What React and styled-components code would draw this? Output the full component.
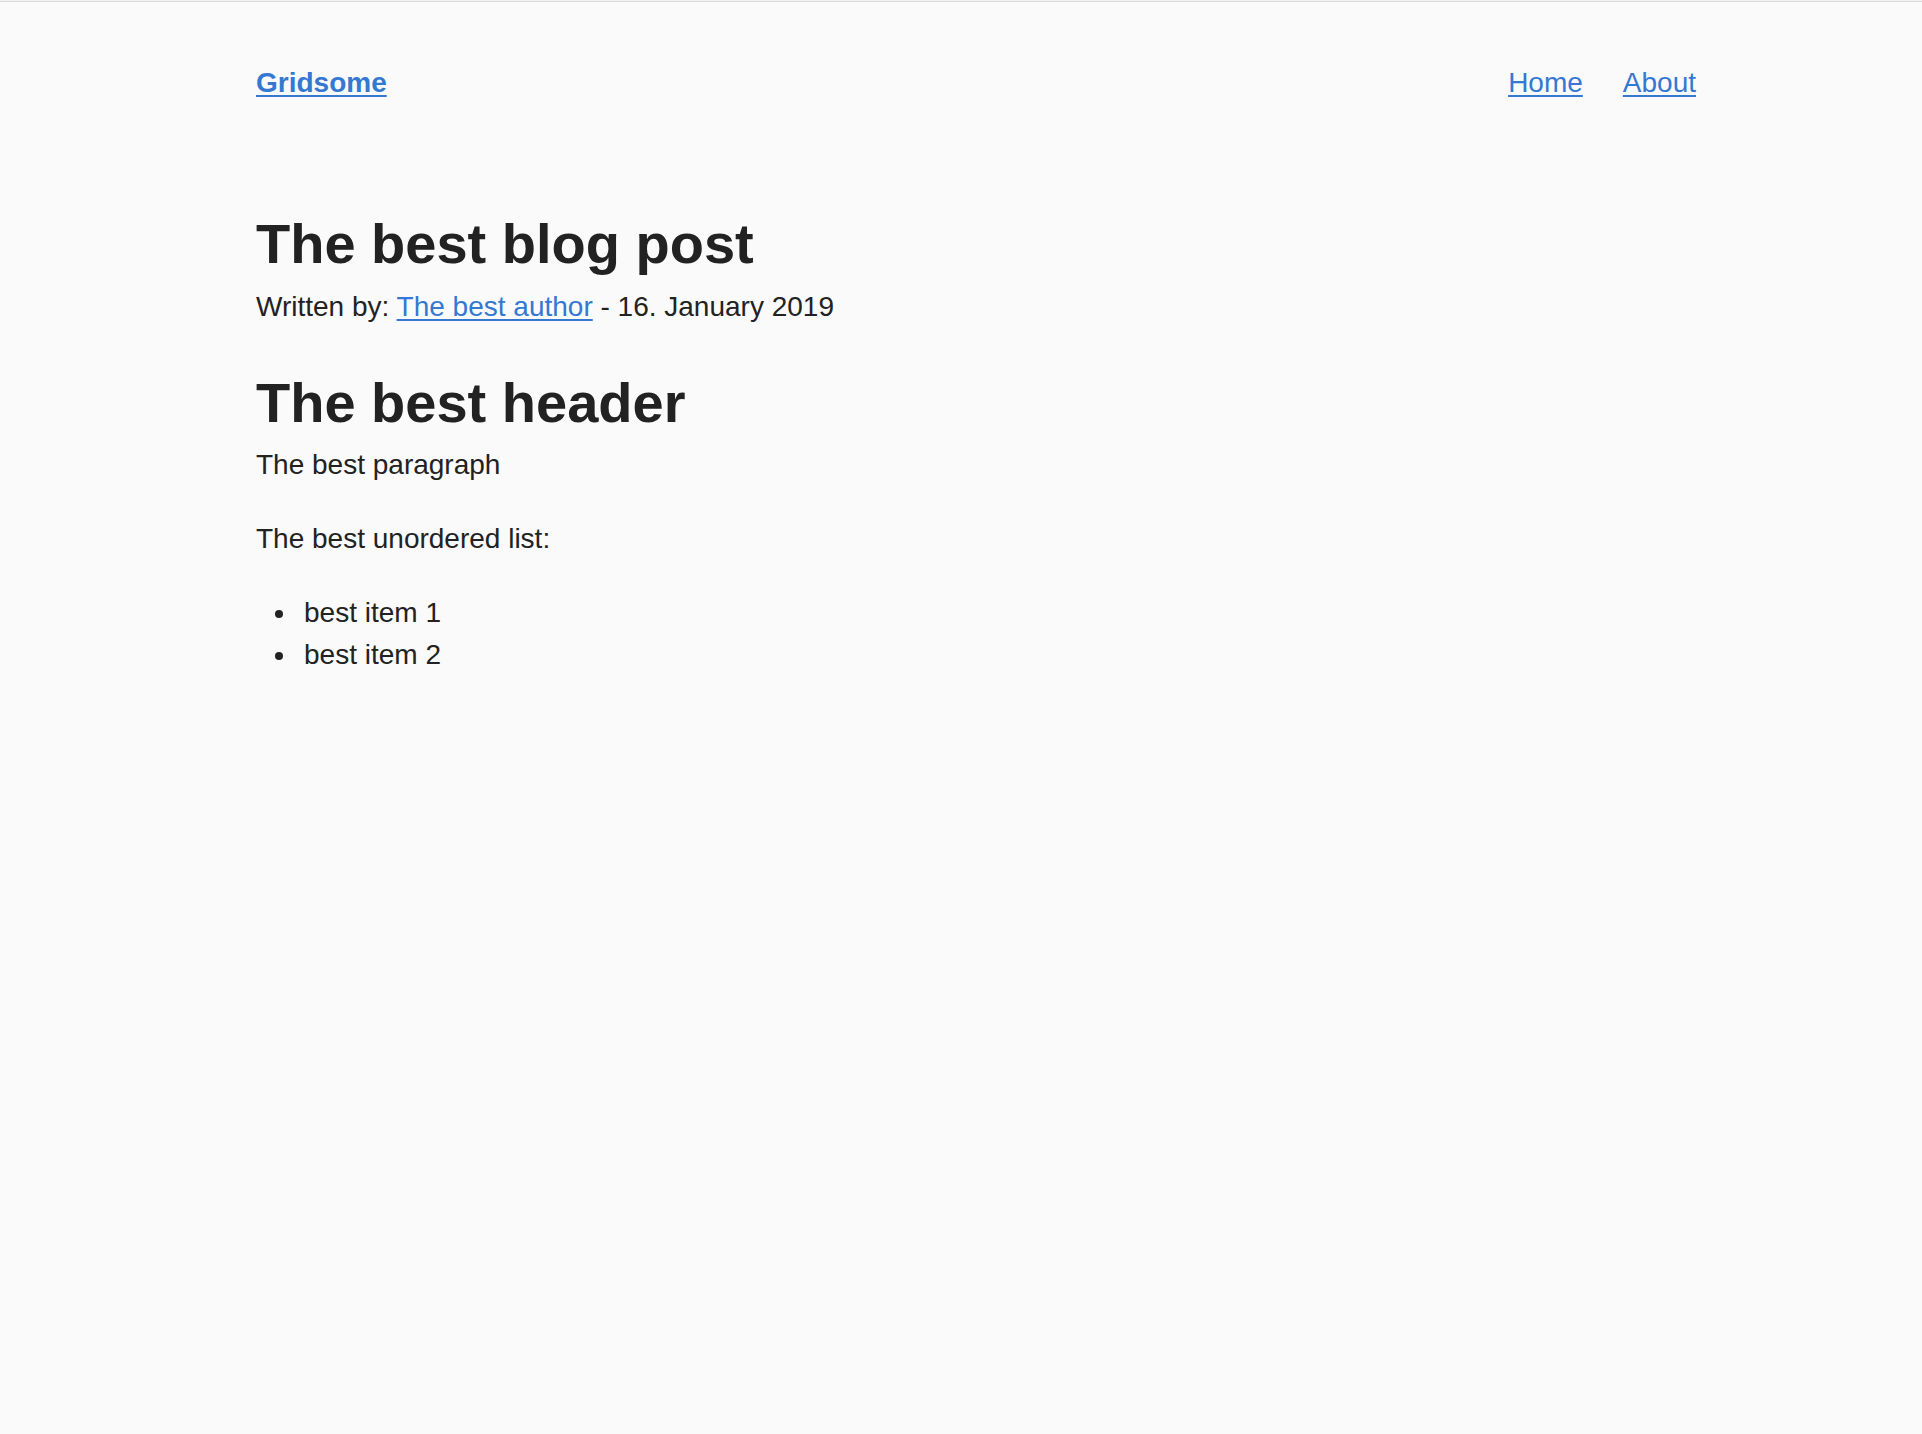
import React from "react";
import styled, { createGlobalStyle } from "styled-components";

const GlobalStyle = createGlobalStyle`
  html, body {
    margin: 0;
    padding: 0;
    background: #fafafa;
  }
  body {
    font-family: "Liberation Sans", Arial, Helvetica, sans-serif;
    font-size: 28px;
    line-height: 1.5;
    color: #222;
    min-height: 1434px;
  }
`;

const TopRule = styled.div`
  height: 1px;
  background: #f0f0f0;
  border-bottom: 1px solid #dadada;
`;

const Layout = styled.div`
  padding: 0 226px 0 256px;
`;

const Header = styled.header`
  display: flex;
  justify-content: space-between;
  align-items: center;
  height: 161px;
  margin-bottom: 39px;
`;

const Link = styled.a`
  color: #3478d2;
  text-decoration: underline;
  text-decoration-thickness: 2px;
  text-underline-offset: 3px;
  font-weight: ${(p) => (p.$bold ? 700 : 400)};
  cursor: pointer;
`;

const Nav = styled.nav`
  display: flex;
  gap: 40px;
`;

const Title = styled.h1`
  font-size: 56px;
  line-height: 1.5;
  font-weight: 700;
  margin: 0;
  color: #222;
`;

const Heading = styled.h2`
  font-size: 56px;
  line-height: 1.46;
  font-weight: 700;
  margin: 34px 0 0;
  color: #222;
`;

const Byline = styled.p`
  margin: 0;
`;

const Paragraph = styled.p`
  margin: 0 0 32px;
`;

const List = styled.ul`
  margin: 0;
  padding-left: 48px;
  list-style: none;
`;

const Item = styled.li`
  position: relative;
  line-height: 42px;

  &::before {
    content: "";
    position: absolute;
    left: -29px;
    top: 18px;
    width: 8px;
    height: 8px;
    border-radius: 50%;
    background: #222;
  }
`;

export default function App() {
  return (
    <>
      <GlobalStyle />
      <TopRule />
      <Layout>
        <Header>
          <Link $bold href="#">Gridsome</Link>
          <Nav>
            <Link href="#">Home</Link>
            <Link href="#">About</Link>
          </Nav>
        </Header>
        <article>
          <Title>The best blog post</Title>
          <Byline>
            Written by: <Link href="#">The best author</Link> - 16. January 2019
          </Byline>
          <Heading>The best header</Heading>
          <Paragraph>The best paragraph</Paragraph>
          <Paragraph>The best unordered list:</Paragraph>
          <List>
            <Item>best item 1</Item>
            <Item>best item 2</Item>
          </List>
        </article>
      </Layout>
    </>
  );
}
